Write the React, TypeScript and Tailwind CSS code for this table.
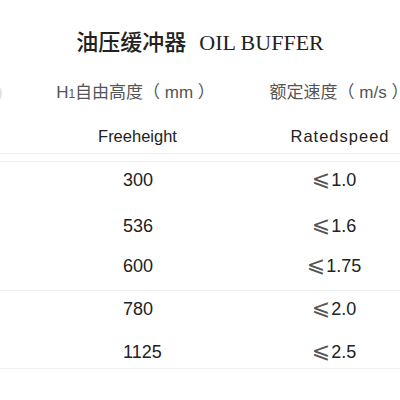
const rowsA = [
  { h: '300', v: '1.0', mt: 'mt-[8px]' },
  { h: '536', v: '1.6', mt: 'mt-[26px]' },
  { h: '600', v: '1.75', mt: 'mt-[20px]' },
];

const rowsB = [
  { h: '780', v: '2.0', mt: 'mt-[8px]' },
  { h: '1125', v: '2.5', mt: 'mt-[23px]' },
];

function DataRow({ h, v, mt }: { h: string; v: string; mt: string }) {
  return (
    <div className={`grid grid-cols-[50px_175px_218px] h-[20px] text-[18px] leading-[20px] text-[#222] ${mt}`}>
      <div />
      <div className="pl-[73px]">{h}</div>
      <div className="-mt-[2px] text-center h-[20px] whitespace-nowrap">
        <span className="font-['DejaVu_Sans'] text-[22px] leading-none text-[#555] mr-[1px]">⩽</span>
        {v}
      </div>
    </div>
  );
}

export default function App() {
  return (
    <div className="w-[400px] h-[400px] overflow-hidden bg-white font-['Liberation_Sans','Noto_Sans_CJK_SC',sans-serif]">
      <div className="w-[443px]">
        {/* title */}
        <div className="mt-[31px] w-[400px] text-center text-[22px] leading-[24px] text-[#222] font-['Liberation_Serif','Noto_Sans_CJK_SC',serif]">
          <span className="mr-[13px] font-medium">油压缓冲器</span>
          <span>OIL BUFFER</span>
        </div>

        {/* header row 1 */}
        <div className="mt-[29px] grid grid-cols-[50px_175px_218px] text-[17px] leading-[18px] text-[#555] whitespace-nowrap">
          <div className="-ml-[3px] text-[#ddd]">)</div>
          <div className="text-center pr-[4px]">
            H<span className="text-[12px]">1</span>自由高度（ mm ）
          </div>
          <div className="text-center pl-[10px]">额定速度（ m/s ）</div>
        </div>

        {/* header row 2 */}
        <div className="mt-[24px] grid grid-cols-[50px_175px_218px] text-[16.5px] leading-[18px] text-[#222] pb-[8px] border-b border-[#efefef]">
          <div />
          <div className="text-center">Freeheight</div>
          <div className="text-center pl-[12px] tracking-[1px]">Ratedspeed</div>
        </div>
        <div className="h-[8px] border-b border-[#efefef]" />

        <div className="pb-[14px] border-b border-[#efefef]">
          {rowsA.map((r) => (
            <DataRow key={r.h} {...r} />
          ))}
        </div>
        <div className="pb-[6px] border-b border-[#efefef]">
          {rowsB.map((r) => (
            <DataRow key={r.h} {...r} />
          ))}
        </div>
      </div>
    </div>
  );
}
